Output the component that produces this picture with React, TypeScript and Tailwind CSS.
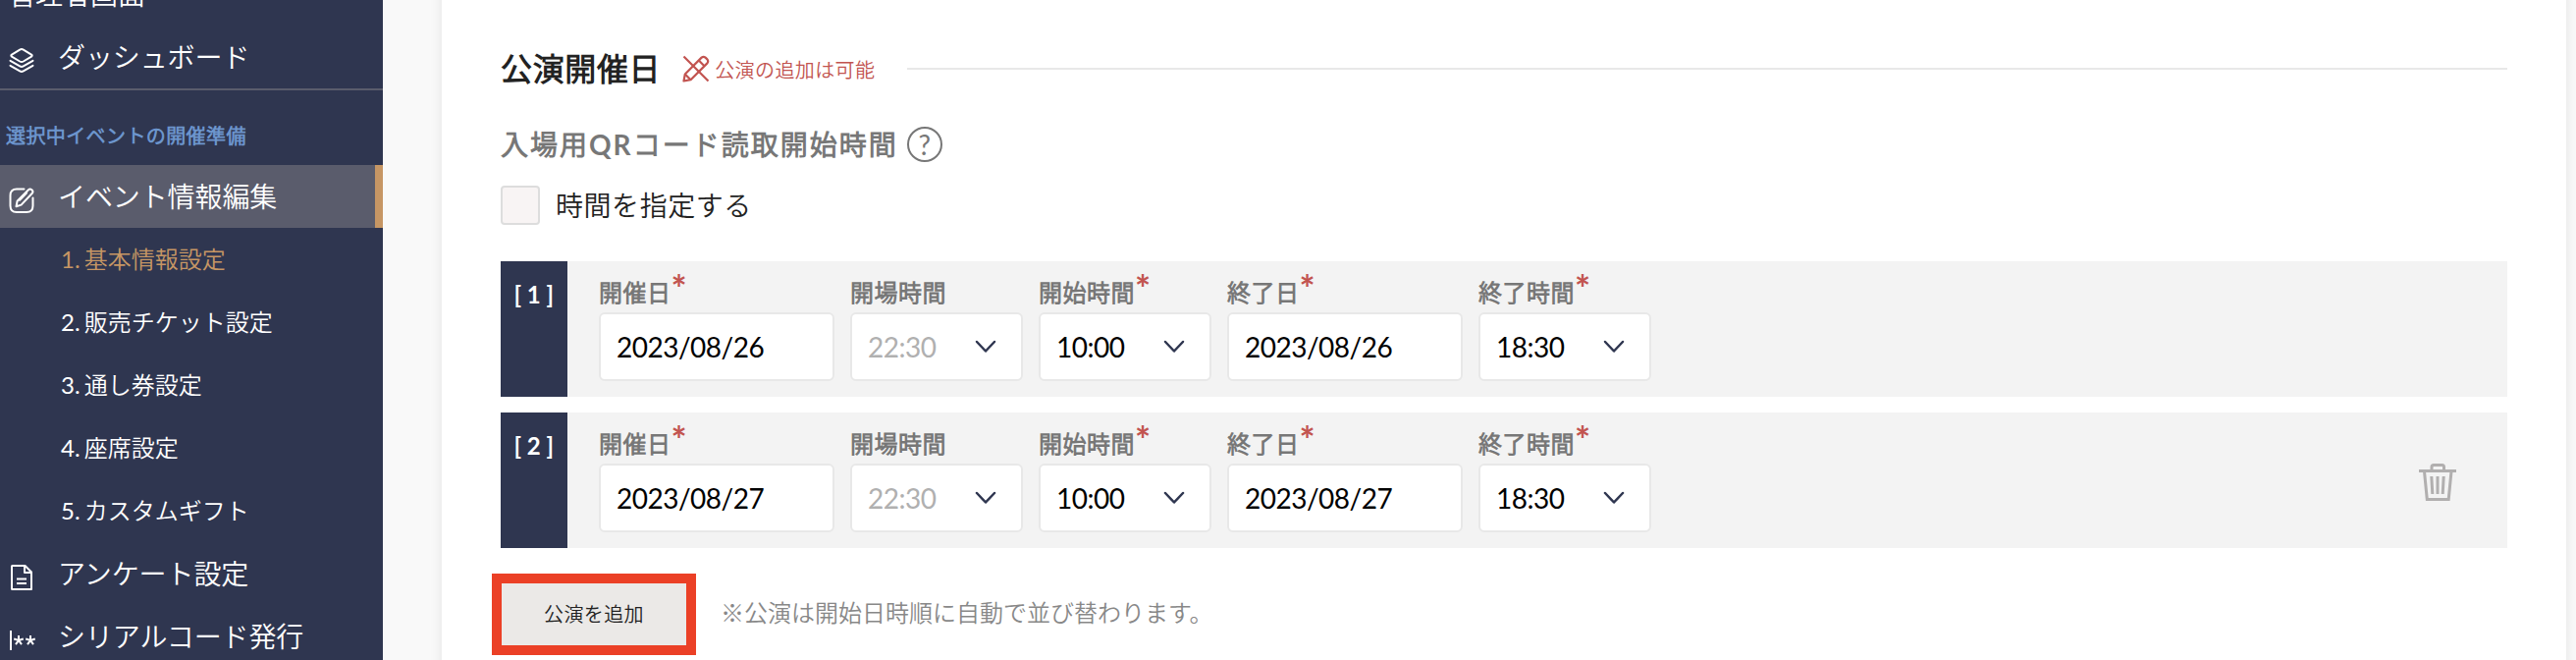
import React from 'react';

interface Performance {
  startDate: string;
  openTime: string;
  startTime: string;
  endDate: string;
  endTime: string;
  removable: boolean;
}

const performances: Performance[] = [
  { startDate: '2023/08/26', openTime: '22:30', startTime: '10:00', endDate: '2023/08/26', endTime: '18:30', removable: false },
  { startDate: '2023/08/27', openTime: '22:30', startTime: '10:00', endDate: '2023/08/27', endTime: '18:30', removable: true },
];

const subItems = ['1. 基本情報設定', '2. 販売チケット設定', '3. 通し券設定', '4. 座席設定', '5. カスタムギフト'];

const LayersIcon = () => (
  <svg width="26" height="28" viewBox="0 0 26 28" fill="none" stroke="currentColor" strokeWidth="2" strokeLinejoin="round" strokeLinecap="round">
    <path d="M11.2 2.6 3 7.6Q1.6 8.6 3 9.6L11.2 14.5Q13 15.5 14.8 14.5L23 9.6Q24.4 8.6 23 7.6L14.8 2.6Q13 1.6 11.2 2.6Z" />
    <path d="M1.5 13.8 11.2 19.4Q13 20.4 14.8 19.4L24.5 13.8" />
    <path d="M1.5 18.8 11.2 24.4Q13 25.4 14.8 24.4L24.5 18.8" />
  </svg>
);

const EditIcon = () => (
  <svg width="26" height="28" viewBox="0 0 26 28" fill="none" stroke="currentColor" strokeWidth="2" strokeLinejoin="round" strokeLinecap="round">
    <path d="M15.5 2.5H8Q1.5 2.500 1.5 9V19.5Q1.5 26 8 26H18Q24.5 26 24.5 19.5V11.5" />
    <path d="M7.5 20.3 8.6 14.8 20 3.2Q21.6 1.8 23.4 3.2Q25.3 5 23.8 6.8L12.6 18.6Z" />
    <path d="M18 6.5 11 13.8" />
  </svg>
);

const FileIcon = () => (
  <svg width="26" height="28" viewBox="0 0 26 28" fill="none" stroke="currentColor" strokeWidth="2" strokeLinejoin="round">
    <path d="M3.5 2H16.5L23 8.5V26H3.5Q3 26 3 25.5V2.5Q3 2 3.5 2Z" />
    <path d="M16 2V9H23M8 15.5H18M8 20H18" />
  </svg>
);

const SerialIcon = () => (
  <svg width="28" height="22" viewBox="0 0 28 22" fill="none" stroke="currentColor" strokeWidth="2">
    <path d="M2 1V21" />
    <path d="M10 6V11L5.2 9.5M10 11L14.8 9.5M10 11L7 15.2M10 11L13 15.2" />
    <path d="M22 6V11L17.2 9.5M22 11L26.8 9.5M22 11L19 15.2M22 11L25 15.2" />
  </svg>
);

const PencilOffIcon = () => (
  <svg width="28" height="28" viewBox="0 0 28 28" fill="none" stroke="currentColor" strokeWidth="2.2" strokeLinejoin="round">
    <path d="M1.5 26.5 2.8 19.5 19.6 2.6Q21.6 1 23.6 2.6L25.4 4.4Q27 6.4 25.4 8.4L8.6 25.2Z" />
    <path d="M2.8 19.5 8.6 25.2M16.8 5.5 22.5 11.2M1.5 1.5 26.5 26.5" />
  </svg>
);

const TrashIcon = () => (
  <svg width="38" height="38" viewBox="0 0 38 38" fill="none" stroke="#b1afaf" strokeWidth="3">
    <path d="M0 7.5H38" />
    <path d="M13 7V3.5Q13 1.5 15 1.5H23.5Q25.5 1.5 25.5 3.5V7" />
    <path d="M5.5 8 8.3 36.5H30.2L33 8" />
    <path d="M12.8 13 13.8 31M19 13V31M25.2 13 24.2 31" />
  </svg>
);

const Chevron = () => (
  <svg width="22" height="14" viewBox="0 0 22 14" fill="none" stroke="#2f3650" strokeWidth="2.5" strokeLinecap="round" strokeLinejoin="round">
    <path d="M2 2 11 11.5 20 2" />
  </svg>
);

const MenuItem: React.FC<{ icon: React.ReactNode; label: string; active?: boolean }> = ({ icon, label, active = false }) => (
  <div className={`h-16 flex items-center pl-[9px] ${active ? 'bg-[#5a5c6c] border-r-8 border-[#c69664]' : ''}`}>
    <span className="w-[50px] shrink-0 pt-[7px]">{icon}</span>
    <span className="text-[28px] leading-[40px] tracking-[-0.1px] whitespace-nowrap">{label}</span>
  </div>
);

const Field: React.FC<{ label: string; value: string; required?: boolean; select?: boolean; disabled?: boolean }> = ({
  label,
  value,
  required = false,
  select = false,
  disabled = false,
}) => (
  <div className={select ? 'w-44' : 'w-60'}>
    <div className="h-[52px] pt-[15px] flex text-2xl leading-[34px] font-bold tracking-[0.02em] text-[#777]">
      {label}
      {required && <span className="-mt-[5px] text-[38px] leading-[34px] font-bold text-[#c25450]">*</span>}
    </div>
    <div
      className={`h-[70px] pl-4 pr-[25px] flex items-center justify-between rounded-md border-2 border-[#e8e8e8] bg-white text-[28px] leading-10 tracking-[-0.5px] ${
        disabled ? 'text-[#b0b0b0]' : 'text-black'
      }`}
    >
      {value}
      {select && <Chevron />}
    </div>
  </div>
);

const PerformanceRow: React.FC<{ index: number; item: Performance }> = ({ index, item }) => (
  <div className="h-[138px] flex bg-[#f3f3f3]">
    <div className="w-[68px] shrink-0 pt-[17px] bg-[#2f3650] text-white text-center text-2xl leading-[34px] font-bold tracking-[0.02em] [word-spacing:-1px]">
      [ {index} ]
    </div>
    <div className="flex-1 flex gap-4 pl-8">
      <Field label="開催日" value={item.startDate} required />
      <Field label="開場時間" value={item.openTime} select disabled />
      <Field label="開始時間" value={item.startTime} required select />
      <Field label="終了日" value={item.endDate} required />
      <Field label="終了時間" value={item.endTime} required select />
    </div>
    {item.removable && (
      <button className="w-[142px] pl-[52px] pt-1">
        <TrashIcon />
      </button>
    )}
  </div>
);

const Sidebar = () => (
  <nav className="w-[390px] shrink-0 overflow-hidden bg-[#2f3650] text-white">
    <div className="h-7 flex flex-col justify-end pb-3.5 pl-2">
      <span className="text-[28px] leading-[40px]">管理者画面</span>
    </div>
    <div className="h-16 pb-0.5 border-b-2 border-[#5a5c6c] flex flex-col justify-center">
      <MenuItem icon={<LayersIcon />} label="ダッシュボード" />
    </div>
    <div className="h-[76px] pt-[31px] pl-1.5 text-xl leading-[30px] font-bold tracking-[0.02em] text-[#6c95cd]">
      選択中イベントの開催準備
    </div>
    <MenuItem icon={<EditIcon />} label="イベント情報編集" active />
    {subItems.map((label, i) => (
      <div key={label} className={`h-16 flex items-center pl-[62px] text-2xl [word-spacing:-2px] ${i === 0 ? 'text-[#c69664]' : ''}`}>
        {label}
      </div>
    ))}
    <MenuItem icon={<FileIcon />} label="アンケート設定" />
    <MenuItem icon={<SerialIcon />} label="シリアルコード発行" />
  </nav>
);

export default function App() {
  return (
    <div className="w-[2624px] h-[672px] flex overflow-hidden bg-[#f9f9f9] text-[#222] font-['Lato','Noto_Sans_CJK_JP_DemiLight','Noto_Sans_CJK_JP',sans-serif]">
      <Sidebar />
      <main className="-my-5 py-5 ml-[60px] w-[2164px] px-[60px] bg-white shadow-[0_0_12px_rgba(0,0,0,0.09)]">
        {/* Section heading */}
        <div className="h-[140px] flex items-center">
          <h2 className="text-[32px] font-bold tracking-[0.02em]">公演開催日</h2>
          <div className="ml-[22px] flex items-center text-[#c25450]">
            <PencilOffIcon />
            <span className="ml-[5px] pt-0.5 text-xl tracking-[0.02em]">公演の追加は可能</span>
          </div>
          <div className="ml-[33px] flex-1 h-0.5 bg-[#e8e8e8]" />
        </div>

        {/* QR reading start time */}
        <div className="-mt-[13px] h-10 flex items-center">
          <span className="text-[28px] leading-10 font-bold tracking-[2px] text-[#777]">入場用QRコード読取開始時間</span>
          <span className="ml-[9px] size-9 flex items-center justify-center rounded-full border-2 border-[#777] text-[28px] leading-8 text-[#777]">?</span>
        </div>
        <label className="mt-[22px] h-10 flex items-center gap-4">
          <span className="size-10 rounded border-2 border-[#ddd] bg-[#f8f4f4]" />
          <span className="text-[28px] leading-10 tracking-[0.02em]">時間を指定する</span>
        </label>

        {/* Performances */}
        <div className="mt-[37px] flex flex-col gap-4">
          {performances.map((item, i) => (
            <PerformanceRow key={i} index={i + 1} item={item} />
          ))}
        </div>

        <div className="mt-[26px] -ml-[9px] flex items-center">
          <button className="w-[208px] h-[83px] pb-0.5 border-[10px] border-[#eb4026] bg-[#ebe9e7] text-xl tracking-[0.02em]">
            公演を追加
          </button>
          <span className="ml-[25px] pb-[3px] text-2xl text-[#888]">※公演は開始日時順に自動で並び替わります。</span>
        </div>
      </main>
    </div>
  );
}
